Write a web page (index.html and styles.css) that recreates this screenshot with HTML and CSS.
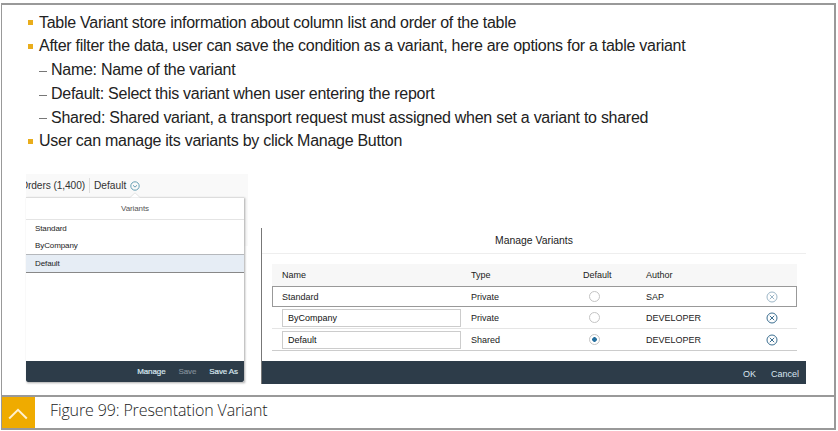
FILE: index.html
```html
<!DOCTYPE html>
<html lang="en">
<head>
<meta charset="utf-8">
<title>Presentation Variant</title>
<link rel="stylesheet" href="styles.css">
</head>
<body>
<figure class="frame">
  <div class="slide">
    <ul class="notes">
      <li><span>Table Variant store information about column list and order of the table</span></li>
      <li><span>After filter the data, user can save the condition as a variant, here are options for a table variant</span></li>
      <li class="sub"><span>Name: Name of the variant</span></li>
      <li class="sub"><span>Default: Select this variant when user entering the report</span></li>
      <li class="sub"><span>Shared: Shared variant, a transport request must assigned when set a variant to shared</span></li>
      <li><span>User can manage its variants by click Manage Button</span></li>
    </ul>
    <div class="shots">
      <section class="list-shot">
        <header class="toolbar">
          <span class="orders"><span>Orders (1,400)</span></span>
          <span class="current">Default</span>
          <svg class="chev" viewBox="0 0 10 10"><circle cx="5" cy="5" r="4.2"/><path d="M3 4.3 5 6.1 7 4.3"/></svg>
        </header>
        <div class="popover">
          <svg class="arrow" viewBox="0 0 10 6"><path d="M0 5.5 5 .8 10 5.5"/></svg>
          <div class="pop-title">Variants</div>
          <div class="item">Standard</div>
          <div class="item">ByCompany</div>
          <div class="item selected">Default</div>
          <footer class="bar pop-bar"><span>Manage</span><span class="off">Save</span><span>Save As</span></footer>
        </div>
      </section>
      <section class="dialog">
        <div class="dlg-title">Manage Variants</div>
        <div class="table">
          <div class="row head"><span>Name</span><span>Type</span><span>Default</span><span>Author</span></div>
          <div class="row focus"><span>Standard</span><span>Private</span><i class="radio"></i><span>SAP</span><svg class="del dim" viewBox="0 0 12 12"><circle cx="6" cy="6" r="5"/><path d="M3.8 3.8 8.2 8.2M8.2 3.8 3.8 8.2"/></svg></div>
          <div class="row"><span class="input">ByCompany</span><span>Private</span><i class="radio"></i><span>DEVELOPER</span><svg class="del" viewBox="0 0 12 12"><circle cx="6" cy="6" r="5"/><path d="M3.8 3.8 8.2 8.2M8.2 3.8 3.8 8.2"/></svg></div>
          <div class="row last"><span class="input">Default</span><span>Shared</span><i class="radio on"></i><span>DEVELOPER</span><svg class="del" viewBox="0 0 12 12"><circle cx="6" cy="6" r="5"/><path d="M3.8 3.8 8.2 8.2M8.2 3.8 3.8 8.2"/></svg></div>
        </div>
        <footer class="bar dlg-bar"><span>OK</span><span>Cancel</span></footer>
      </section>
    </div>
  </div>
  <figcaption class="caption">
    <div class="badge"><svg viewBox="0 0 20 12"><path d="M1.2 10.5 10 1.8 18.8 10.5"/></svg></div>
    <span>Figure 99: Presentation Variant</span>
  </figcaption>
</figure>
</body>
</html>
```

FILE: styles.css
```css
* { box-sizing: border-box; }
body {
  margin: 0;
  width: 838px;
  height: 431px;
  overflow: hidden;
  background: #fff;
  color: #222;
  font-family: "Liberation Sans", Arial, sans-serif;
}
.frame {
  display: flex;
  flex-direction: column;
  width: 835px;
  height: 427px;
  margin: 3px 0 0 1px;
  border: 2px solid #999;
  border-left-width: 1px;
}
.slide { height: 390px; }
.notes {
  list-style: none;
  margin: 0;
  padding: 5.5px 0 0 26px;
  font-size: 16px;
  letter-spacing: -.275px;
  line-height: 23.75px;
}
.notes li {
  display: flex;
  align-items: center;
  height: 23.75px;
  white-space: nowrap;
}
.notes li::before {
  content: "";
  width: 5px;
  height: 5px;
  margin-right: 6px;
  background: #e9ad1c;
}
.notes .sub::before {
  width: 8px;
  height: 1px;
  margin: 3px 4px 0 11px;
  background: #777;
}
.shots { display: flex; padding: 21px 0 0 24px; }

.list-shot { width: 222px; height: 211px; background: linear-gradient(#f9f9f9 72px, #fff 72px); }
.toolbar { display: flex; align-items: center; height: 23px; font-size: 10.2px; color: #333; }
.orders {
  display: flex;
  justify-content: flex-end;
  width: 64px;
  height: 15px;
  line-height: 15px;
  padding-right: 4px;
  overflow: hidden;
  white-space: nowrap;
  letter-spacing: -.1px;
  border-right: 1px solid #ddd;
}
.current { margin-left: 4px; }
.chev { width: 10px; height: 10px; margin-left: 4px; fill: none; stroke: #5795ac; stroke-width: .9; }
.popover {
  position: relative;
  display: flex;
  flex-direction: column;
  width: 218px;
  height: 185px;
  background: #fff;
  border-top: 1px solid #ddd;
  box-shadow: 1px 1px 2px #aaa;
  font-size: 8px;
  letter-spacing: -.1px;
}
.arrow { position: absolute; left: 104px; top: -6px; width: 10px; height: 6px; fill: #fff; stroke: #ddd; stroke-width: .8; }
.pop-title { height: 22px; line-height: 21px; text-align: center; border-bottom: 1px solid #e4e4e4; color: #555; }
.item { height: 17px; line-height: 17px; padding-left: 9px; }
.selected { height: 19px; line-height: 17px; background: #e6edf5; border-top: 1px solid #b5b8bc; border-bottom: 1px solid #888; }
.bar { display: flex; align-items: center; justify-content: flex-end; margin-top: auto; background: #2d3c49; color: #d8e6ef; }
.pop-bar { height: 21px; gap: 13px; padding-right: 6px; font-size: 8px; border-radius: 0 0 2px 2px; -webkit-text-stroke: .2px; }
.off { color: #7f8b96; }

.dialog {
  display: flex;
  flex-direction: column;
  width: 545px;
  height: 156px;
  margin: 54px 0 0 13px;
  border-left: 1px solid #777;
  font-size: 9px;
}
.dlg-title { height: 26px; line-height: 25px; text-align: center; font-size: 10.4px; border-bottom: 1px solid #eee; }
.table { margin: 10px 9px 0 10px; }
.row {
  display: grid;
  grid-template-columns: 189px 112px 63px 120px 12px;
  align-items: center;
  height: 22px;
  padding-left: 10px;
  border-bottom: 1px solid #e5e5e5;
}
.head { background: #f7f7f7; border: 0; }
.focus { height: 21px; padding-left: 9px; border: 1px solid #999; }
.last { border-color: #ccc; }
.input { width: 179px; height: 18px; line-height: 16px; padding-left: 5px; border: 1px solid #ccc; color: #111; }
.radio { display: block; width: 11px; height: 11px; margin-left: 6px; border: 1px solid #c4c4c4; border-radius: 50%; }
.on { background: radial-gradient(circle, #256f9e 0 2px, #fff 2.6px); }
.del { width: 12px; height: 12px; fill: none; stroke: #3c6f91; stroke-width: 1; }
.dim { opacity: .5; }
.dlg-bar { height: 23px; gap: 15px; padding: 3px 7px 0 0; }

.caption { display: flex; flex: 1; align-items: stretch; border-top: 2px solid #999; font: 300 16px/27px "Open Sans", sans-serif; letter-spacing: -.13px; }
.caption span { margin-left: 15px; white-space: nowrap; }
.badge { display: flex; align-items: center; justify-content: center; width: 33px; background: #efab00; }
.badge svg { width: 20px; height: 12px; margin-top: 3px; margin-right: 1px; fill: none; stroke: #fff1cf; stroke-width: 2; }
```
